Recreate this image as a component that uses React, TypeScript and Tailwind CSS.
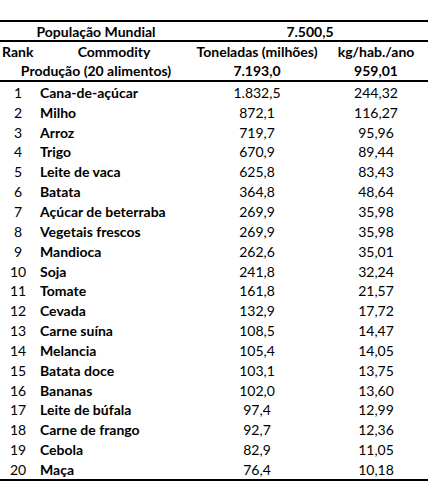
import React from "react";

const rows: [string, string, string][] = [
  ["Cana-de-açúcar", "1.832,5", "244,32"],
  ["Milho", "872,1", "116,27"],
  ["Arroz", "719,7", "95,96"],
  ["Trigo", "670,9", "89,44"],
  ["Leite de vaca", "625,8", "83,43"],
  ["Batata", "364,8", "48,64"],
  ["Açúcar de beterraba", "269,9", "35,98"],
  ["Vegetais frescos", "269,9", "35,98"],
  ["Mandioca", "262,6", "35,01"],
  ["Soja", "241,8", "32,24"],
  ["Tomate", "161,8", "21,57"],
  ["Cevada", "132,9", "17,72"],
  ["Carne suína", "108,5", "14,47"],
  ["Melancia", "105,4", "14,05"],
  ["Batata doce", "103,1", "13,75"],
  ["Bananas", "102,0", "13,60"],
  ["Leite de búfala", "97,4", "12,99"],
  ["Carne de frango", "92,7", "12,36"],
  ["Cebola", "82,9", "11,05"],
  ["Maça", "76,4", "10,18"],
];

export default function App() {
  return (
    <div
      className="w-[431px] h-[501px] bg-white text-black text-[14px] pt-[20px]"
      style={{ fontFamily: "Lato, 'Open Sans', sans-serif" }}
    >
      <div className="w-[428px]">
        <div className="border-t-2 border-black flex h-[20px] items-center pt-[1px] font-bold">
          <div className="w-[192px] text-center">População Mundial</div>
          <div className="w-[236px] text-center">7.500,5</div>
        </div>
        <div className="border-t-2 border-black flex h-[20px] items-center pt-[1px] font-bold">
          <div className="w-[36px] pl-[2px]">Rank</div>
          <div className="w-[156px] text-center">Commodity</div>
          <div className="w-[130px] text-center">Toneladas (milhões)</div>
          <div className="w-[106px] pl-[2px] text-center">kg/hab./ano</div>
        </div>
        <div className="flex h-[20px] items-center pt-[1px] font-bold">
          <div className="w-[192px] text-center">Produção (20 alimentos)</div>
          <div className="w-[130px] text-center">7.193,0</div>
          <div className="w-[106px] pl-[2px] text-center">959,01</div>
        </div>
        <div className="border-t-2 border-b-2 border-black">
          {rows.map((r, i) => (
            <div key={i} className="flex h-[19.85px] items-center pt-[1px]">
              <div className="w-[36px] text-center">{i + 1}</div>
              <div className="w-[156px] pl-[4px] font-bold">{r[0]}</div>
              <div className="w-[130px] text-center">{r[1]}</div>
              <div className="w-[106px] pl-[2px] text-center">{r[2]}</div>
            </div>
          ))}
        </div>
      </div>
    </div>
  );
}
